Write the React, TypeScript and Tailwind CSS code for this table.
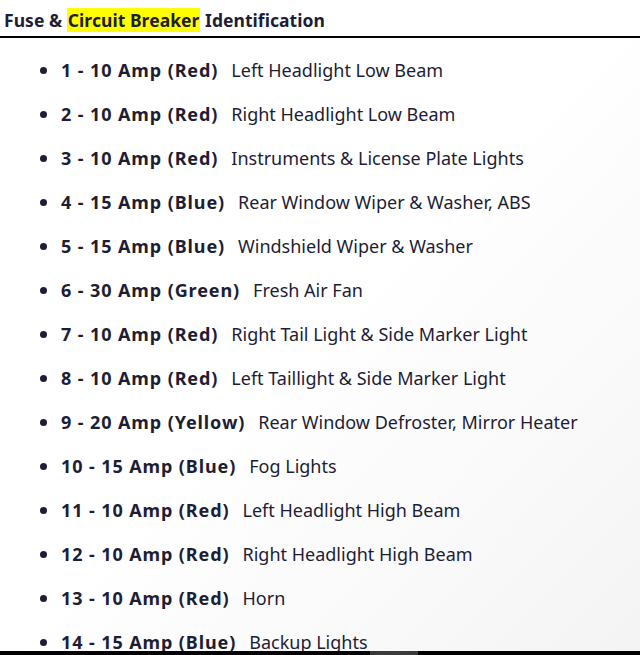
const fuses: [string, string][] = [
  ["1 - 10 Amp (Red)", "Left Headlight Low Beam"],
  ["2 - 10 Amp (Red)", "Right Headlight Low Beam"],
  ["3 - 10 Amp (Red)", "Instruments & License Plate Lights"],
  ["4 - 15 Amp (Blue)", "Rear Window Wiper & Washer, ABS"],
  ["5 - 15 Amp (Blue)", "Windshield Wiper & Washer"],
  ["6 - 30 Amp (Green)", "Fresh Air Fan"],
  ["7 - 10 Amp (Red)", "Right Tail Light & Side Marker Light"],
  ["8 - 10 Amp (Red)", "Left Taillight & Side Marker Light"],
  ["9 - 20 Amp (Yellow)", "Rear Window Defroster, Mirror Heater"],
  ["10 - 15 Amp (Blue)", "Fog Lights"],
  ["11 - 10 Amp (Red)", "Left Headlight High Beam"],
  ["12 - 10 Amp (Red)", "Right Headlight High Beam"],
  ["13 - 10 Amp (Red)", "Horn"],
  ["14 - 15 Amp (Blue)", "Backup Lights"],
];

export default function App() {
  return (
    <div className="h-[655px] w-[640px] overflow-hidden bg-gradient-to-br from-white via-white to-[#f4f4f4] flex flex-col font-['Noto_Sans',sans-serif] text-[#1d1d35]">
      <div className="flex-1 overflow-hidden">
        <h2 className="pl-[4px] pt-[7px] pb-[3px] text-[17.5px] leading-[26px] font-bold tracking-[0.05px] border-b-2 border-black">
          Fuse &amp; <span className="bg-[#ffff00] px-[1px]">Circuit Breaker</span> Identification
        </h2>
        <ul className="mt-[10px] pl-[40px]">
          {fuses.map(([label, desc]) => (
            <li key={label} className="flex items-center h-[44px] text-[18px]">
              <span className="w-[7px] h-[7px] rounded-full bg-[#1d1d35] mr-[14px]" />
              <span className="font-bold tracking-[0.9px]">{label}</span>
              <span className="ml-[13px]">{desc}</span>
            </li>
          ))}
        </ul>
      </div>
      <div className="h-[4px] bg-black flex">
        <div className="w-[370px]" />
        <div className="w-[48px] bg-[#3a3a3a]" />
      </div>
    </div>
  );
}
